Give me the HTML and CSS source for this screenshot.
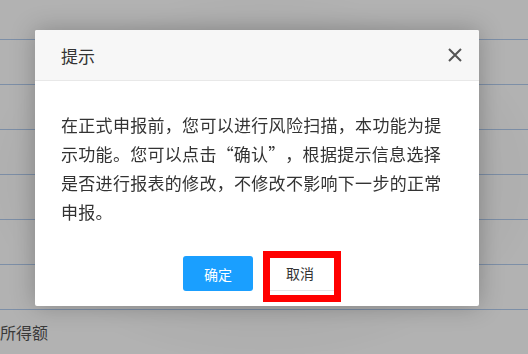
FILE: index.html
```html
<!DOCTYPE html>
<html lang="zh-CN">
  <head>
    <meta charset="UTF-8" />
    <meta name="viewport" content="width=device-width, initial-scale=1.0" />
    <title>提示</title>
    <link rel="stylesheet" href="styles.css">
  </head>
  <body>
    <ul class="rows">
      <li></li>
      <li></li>
      <li></li>
      <li></li>
      <li></li>
      <li></li>
      <li></li>
      <li class="label">所得额</li>
    </ul>
    <div class="mask"></div>
    <div class="dialog">
      <div class="dialog-head">
        <span class="title">提示</span>
        <span class="close">
          <svg width="14" height="14" viewBox="0 0 14 14">
            <path d="M1 1L13 13M13 1L1 13" stroke="#555" stroke-width="2" fill="none" />
          </svg>
        </span>
      </div>
      <div class="dialog-body">
        在正式申报前，您可以进行风险扫描，本功能为提示功能。您可以点击<span class="q open">“</span>确认<span class="q close-q">”</span>，根据提示信息选择是否进行报表的修改，不修改不影响下一步的正常申报。
      </div>
      <div class="dialog-foot">
        <button class="btn ok">确定</button>
        <button class="btn cancel">取消<span class="mark"></span></button>
      </div>
    </div>
  </body>
</html>
```

FILE: styles.css
```css
* {
  margin: 0;
  padding: 0;
  box-sizing: border-box;
}
ul {
  list-style: none;
}
body {
  width: 528px;
  height: 354px;
  overflow: hidden;
  background: #b2b2b2;
  font-family: "Noto Sans CJK SC", "Liberation Sans", sans-serif;
}
.rows {
  margin-top: -5px;
}
.rows li {
  height: 45px;
  border-bottom: 1px solid #7d8fa7;
}
.rows li.label {
  border-bottom: 0;
  line-height: 45px;
  font-size: 16px;
  color: #3a3a3a;
}
.mask {
  position: fixed;
  left: 0;
  top: 0;
  right: 0;
  bottom: 0;
  background: radial-gradient(ellipse at 50% 50%, rgba(0, 0, 0, 0.12), rgba(0, 0, 0, 0) 75%);
}
.dialog {
  position: fixed;
  left: 35px;
  top: 30px;
  width: 444px;
  background: #fff;
  border-radius: 2px;
  box-shadow: 0 0 24px rgba(0, 0, 0, 0.25);
}
.dialog-head {
  height: 51px;
  display: flex;
  align-items: center;
  justify-content: space-between;
  padding: 0 17px 0 26px;
  background: #f7f7f7;
  border-bottom: 1px solid #e8e8e8;
  border-radius: 2px 2px 0 0;
}
.title {
  font-size: 17px;
  color: #333;
}
.close {
  display: flex;
  cursor: pointer;
}
.dialog-body {
  padding: 29px 26px 0 26px;
  font-size: 17px;
  letter-spacing: 0.3px;
  line-height: 29px;
  color: #333;
}
.q {
  display: inline-block;
  width: 1em;
}
.q.open {
  text-align: right;
}
.q.close-q {
  text-align: left;
}
.dialog-foot {
  display: flex;
  justify-content: center;
  gap: 12px;
  padding: 30px 0 15px 4px;
}
.btn {
  position: relative;
  width: 70px;
  height: 35px;
  border: 0;
  border-radius: 3px;
  font-family: inherit;
  font-size: 14px;
  cursor: pointer;
}
.btn.ok {
  background: #1a9fff;
  color: #fff;
}
.btn.cancel {
  background: #fff;
  color: #333;
  border-bottom: 1px solid #e5e5e8;
  border-radius: 0;
}
.mark {
  position: absolute;
  left: -2px;
  top: -5px;
  width: 78px;
  height: 51px;
  border: 7px solid #ff0000;
}
```
